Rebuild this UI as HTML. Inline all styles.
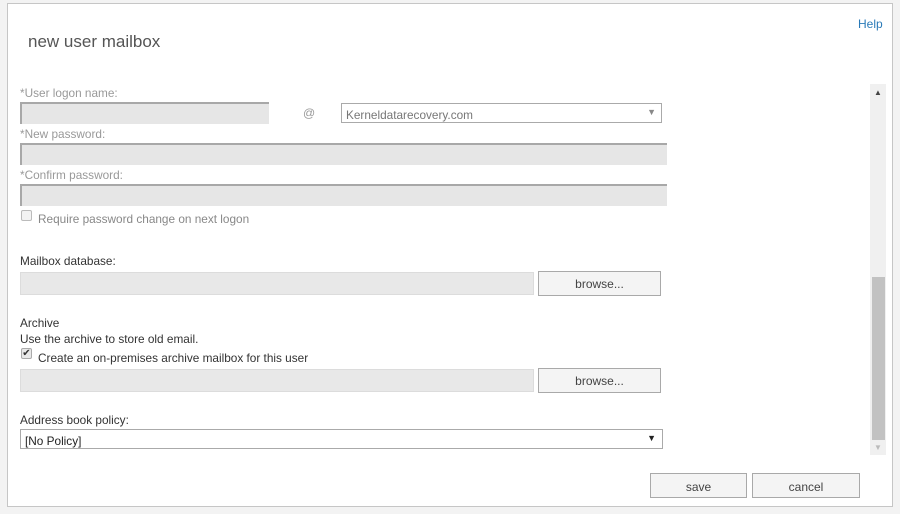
<!DOCTYPE html>
<html><head><meta charset="utf-8"><style>
*{margin:0;padding:0;box-sizing:border-box}
body{width:900px;height:514px;background:#f3f3f3;position:relative;font-family:"Liberation Sans",sans-serif;font-size:11.8px;color:#333;overflow:hidden}
.a{position:absolute}
#panel{left:7px;top:3px;width:886px;height:504px;background:#fff;border:1px solid #c6c6c6}
.lbl{color:#999}
.in{background:#e6e6e6;border-top:2px solid #a8a8a8;border-left:2px solid #a8a8a8}
.in2{background:#e8e8e8;border:1px solid #dcdcdc}
.btn{background:#f4f4f4;border:1px solid #a9a9a9;text-align:center;color:#444;font-size:12px}
</style></head><body>
<div class="a" id="panel"></div>
<div class="a" style="left:858px;top:17px;color:#2a7ab8;font-size:12px">Help</div>
<div class="a" style="left:28px;top:32px;font-size:17px;color:#555">new user mailbox</div>

<div class="a lbl" style="left:20px;top:86px">*User logon name:</div>
<div class="a in" style="left:20px;top:102px;width:249px;height:22px"></div>
<div class="a lbl" style="left:303px;top:106px;font-size:12px">@</div>
<div class="a" style="left:341px;top:103px;width:321px;height:20px;border:1px solid #aaa;color:#777;padding:4px 4px 0">Kerneldatarecovery.com<span style="position:absolute;right:5px;top:3px;font-size:9px;color:#888">▼</span></div>
<div class="a lbl" style="left:20px;top:127px">*New password:</div>
<div class="a in" style="left:20px;top:143px;width:647px;height:22px"></div>
<div class="a lbl" style="left:20px;top:168px">*Confirm password:</div>
<div class="a in" style="left:20px;top:184px;width:647px;height:22px"></div>
<div class="a" style="left:21px;top:210px;width:11px;height:11px;border:1px solid #bbb;border-radius:2px;background:#f3f3f3"></div>
<div class="a lbl" style="left:38px;top:212px;color:#888">Require password change on next logon</div>

<div class="a" style="left:20px;top:254px">Mailbox database:</div>
<div class="a in2" style="left:20px;top:272px;width:514px;height:23px"></div>
<div class="a btn" style="left:538px;top:271px;width:123px;height:25px;line-height:25px">browse...</div>

<div class="a" style="left:20px;top:316px">Archive</div>
<div class="a" style="left:20px;top:332px">Use the archive to store old email.</div>
<div class="a" style="left:21px;top:348px;width:11px;height:11px;border:1px solid #aaa;border-radius:2px;background:#e8e8e8;font-size:10px;line-height:9px;text-align:center;color:#333">✔</div>
<div class="a" style="left:38px;top:351px">Create an on-premises archive mailbox for this user</div>
<div class="a in2" style="left:20px;top:369px;width:514px;height:23px"></div>
<div class="a btn" style="left:538px;top:368px;width:123px;height:25px;line-height:25px">browse...</div>

<div class="a" style="left:20px;top:413px">Address book policy:</div>
<div class="a" style="left:20px;top:429px;width:643px;height:20px;border:1px solid #aaa;padding:4px 4px 0;color:#222">[No Policy]<span style="position:absolute;right:6px;top:3px;font-size:9px;color:#222">▼</span></div>

<div class="a" style="left:870px;top:84px;width:16px;height:371px;background:#f0f0f0"></div>
<div class="a" style="left:872px;top:277px;width:13px;height:163px;background:#c2c2c2"></div>
<div class="a" style="left:874px;top:88px;font-size:8px;color:#444">▲</div>
<div class="a" style="left:874px;top:443px;font-size:8px;color:#bbb">▼</div>

<div class="a btn" style="left:650px;top:473px;width:97px;height:25px;line-height:27px">save</div>
<div class="a btn" style="left:752px;top:473px;width:108px;height:25px;line-height:27px">cancel</div>
</body></html>
